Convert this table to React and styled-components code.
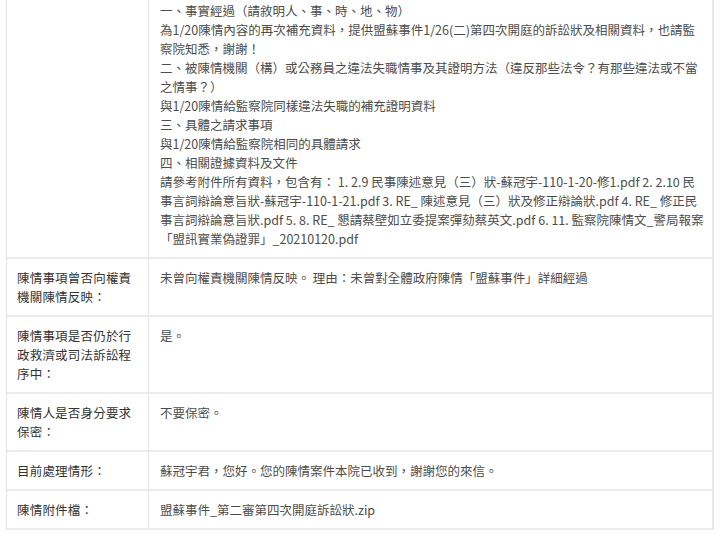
import React from 'react';
import styled, { createGlobalStyle } from 'styled-components';

const GlobalStyle = createGlobalStyle`
  html, body {
    margin: 0;
    padding: 0;
    background: #fff;
    overflow: hidden;
  }
  body {
    font-family: "Noto Sans CJK TC", "Noto Sans", sans-serif;
  }
`;

const Page = styled.div`
  padding: 0 6px;
  width: 708px;
`;

const Table = styled.div`
  margin-top: -8.5px;
  border-left: 1px solid #e4e4e4;
  border-right: 2px solid #e8e8e8;
  border-bottom: 2px solid #ebebeb;
`;

const Row = styled.div`
  display: grid;
  grid-template-columns: 142px minmax(0, 1fr);
  border-top: ${({ first }) => (first ? 'none' : '2px solid #ebebeb')};
`;

const Label = styled.div`
  padding: 9px 10px;
  border-right: 1px solid #e4e4e4;
  font-size: 12.5px;
  line-height: 19px;
  color: #333;
  letter-spacing: 0.2px;
`;

const Value = styled.div`
  padding: 9px 8px 9px 11px;
  font-size: 12.5px;
  line-height: 19px;
  color: #4d4d4d;
  overflow: hidden;
`;

const Line = styled.span`
  display: block;
  white-space: nowrap;
`;

const statement = [
  '一、事實經過（請敘明人、事、時、地、物）',
  '為1/20陳情內容的再次補充資料，提供盟蘇事件1/26(二)第四次開庭的訴訟狀及相關資料，也請監',
  '察院知悉，謝謝！',
  '二、被陳情機關（構）或公務員之違法失職情事及其證明方法（違反那些法令？有那些違法或不當',
  '之情事？）',
  '與1/20陳情給監察院同樣違法失職的補充證明資料',
  '三、具體之請求事項',
  '與1/20陳情給監察院相同的具體請求',
  '四、相關證據資料及文件',
  '請參考附件所有資料，包含有： 1. 2.9 民事陳述意見（三）狀-蘇冠宇-110-1-20-修1.pdf 2. 2.10 民',
  '事言詞辯論意旨狀-蘇冠宇-110-1-21.pdf 3. RE_ 陳述意見（三）狀及修正辯論狀.pdf 4. RE_ 修正民',
  '事言詞辯論意旨狀.pdf 5. 8. RE_ 懇請蔡壁如立委提案彈劾蔡英文.pdf 6. 11. 監察院陳情文_警局報案',
  '「盟訊實業偽證罪」_20210120.pdf',
];

const rows = [
  {
    label: '',
    value: statement.map((t, i) => <Line key={i}>{t}</Line>),
  },
  {
    label: '陳情事項曾否向權責機關陳情反映：',
    value: '未曾向權責機關陳情反映。 理由：未曾對全體政府陳情「盟蘇事件」詳細經過',
  },
  {
    label: '陳情事項是否仍於行政救濟或司法訴訟程序中：',
    value: '是。',
  },
  {
    label: '陳情人是否身分要求保密：',
    value: '不要保密。',
  },
  {
    label: '目前處理情形：',
    value: '蘇冠宇君，您好。您的陳情案件本院已收到，謝謝您的來信。',
  },
  {
    label: '陳情附件檔：',
    value: '盟蘇事件_第二審第四次開庭訴訟狀.zip',
  },
];

export default function App() {
  return (
    <Page>
      <GlobalStyle />
      <Table>
        {rows.map((r, i) => (
          <Row key={i} first={i === 0}>
            <Label>{r.label}</Label>
            <Value>{r.value}</Value>
          </Row>
        ))}
      </Table>
    </Page>
  );
}
